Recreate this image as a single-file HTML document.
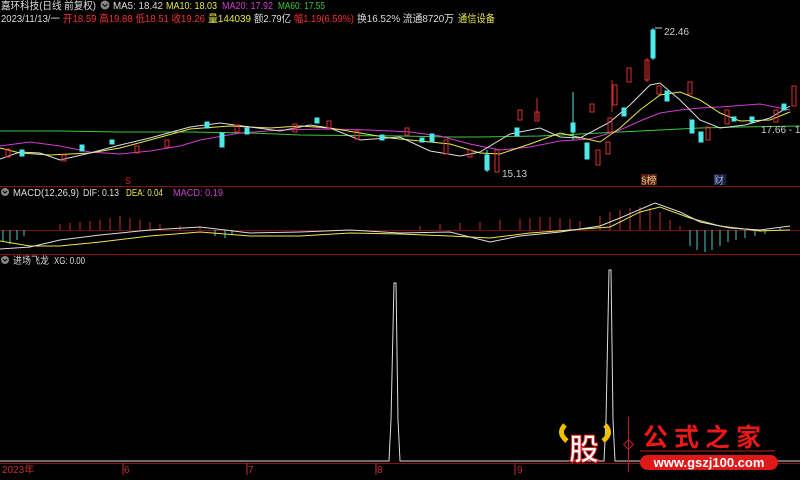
<!DOCTYPE html>
<html><head><meta charset="utf-8"><style>
body{margin:0;background:#000;width:800px;height:475px;overflow:hidden;font-family:"Liberation Sans","Noto Sans CJK SC",sans-serif}
svg text{font-family:"Liberation Sans","Noto Sans CJK SC",sans-serif}
</style></head><body>
<svg width="800" height="475" xmlns="http://www.w3.org/2000/svg">
<rect width="800" height="475" fill="#000"/>
<!-- header -->
<g font-size="10.5">
<text x="1" y="9" fill="#ddd" textLength="95" lengthAdjust="spacingAndGlyphs">嘉环科技(日线 前复权)</text>
<circle cx="105" cy="5" r="4.5" fill="#888"/><path d="M102.5 4l2.5 2.5 2.5-2.5" stroke="#000" fill="none"/>
<text x="113" y="9" fill="#ddd" textLength="50" lengthAdjust="spacingAndGlyphs">MA5: 18.42</text>
<text x="166" y="9" fill="#e8e84a" textLength="51" lengthAdjust="spacingAndGlyphs">MA10: 18.03</text>
<text x="222" y="9" fill="#d03cd0" textLength="51" lengthAdjust="spacingAndGlyphs">MA20: 17.92</text>
<text x="278" y="9" fill="#3cc83c" textLength="47" lengthAdjust="spacingAndGlyphs">MA60: 17.55</text>
<text x="1" y="22" fill="#ddd" textLength="59" lengthAdjust="spacingAndGlyphs">2023/11/13/一</text>
<text x="63" y="22" fill="#f03030" textLength="142" lengthAdjust="spacingAndGlyphs">开18.59 高19.88 低18.51 收19.26</text>
<text x="208" y="22" fill="#e8e84a" textLength="43" lengthAdjust="spacingAndGlyphs">量144039</text>
<text x="254" y="22" fill="#ddd" textLength="37" lengthAdjust="spacingAndGlyphs">额2.79亿</text>
<text x="294" y="22" fill="#f03030" textLength="60" lengthAdjust="spacingAndGlyphs">幅1.19(6.59%)</text>
<text x="357" y="22" fill="#ddd" textLength="97" lengthAdjust="spacingAndGlyphs">换16.52% 流通8720万</text>
<text x="458" y="22" fill="#e8e84a" textLength="37" lengthAdjust="spacingAndGlyphs">通信设备</text>
</g>
<!-- pane lines -->
<line x1="0" y1="186.5" x2="800" y2="186.5" stroke="#8a1010"/>
<line x1="0" y1="254.5" x2="800" y2="254.5" stroke="#8a1010"/>
<line x1="0" y1="463.5" x2="800" y2="463.5" stroke="#8a1010"/>
<text x="125" y="184" fill="#e02020" font-size="9">S</text>
<!-- MA lines main -->
<polyline fill="none" stroke="#3cc83c" points="0,131 60,131 120,132 190,132 250,133 300,135 400,136 450,137 480,137 540,136 620,132 660,130 700,128 740,127 800,126"/>
<polyline fill="none" stroke="#d03cd0" points="0,146 30,142 60,146 90,152 120,154 150,151 180,146 200,140 240,133 280,130 330,129 370,130 410,132 440,136 470,144 500,150 530,147 560,141 590,139 620,130 640,121 660,113 680,110 700,108 720,107 760,104 790,110"/>
<polyline fill="none" stroke="#e8e84a" points="0,148 20,153 50,155 90,153 120,148 150,140 190,129 230,126 270,128 300,126 330,128 360,133 390,138 420,141 450,144 480,153 500,154 530,144 560,133 600,142 620,128 640,110 660,95 680,92 700,100 720,113 740,121 770,120 790,112"/>
<polyline fill="none" stroke="#ddd" points="0,159 20,152 40,153 60,160 90,153 120,145 150,138 190,127 220,123 250,127 280,131 310,125 330,128 360,140 400,137 430,151 460,156 480,152 510,134 540,128 560,137 580,138 610,122 630,105 650,85 660,83 680,100 700,120 720,128 745,125 770,118 790,106"/>
<!-- candles -->
<g stroke-width="1">
<g fill="none" stroke="#e03030">
<rect x="6" y="149" width="4" height="8"/><rect x="62" y="155" width="4" height="6"/><rect x="135" y="146" width="4" height="7"/><rect x="165" y="140" width="4" height="7"/><rect x="235" y="125" width="4" height="7"/><rect x="293" y="124" width="4" height="8"/><rect x="327" y="121" width="4" height="7"/><rect x="355" y="131" width="4" height="8"/><rect x="405" y="128" width="4" height="7"/><rect x="444" y="140" width="4" height="14"/><rect x="468" y="150" width="4" height="7"/><rect x="518" y="110" width="4" height="10"/><rect x="535" y="112" width="4" height="9"/><rect x="590" y="104" width="4" height="8"/><rect x="608" y="118" width="4" height="14"/><rect x="613" y="85" width="4" height="20"/><rect x="627" y="68" width="4" height="14"/><rect x="645" y="60" width="4" height="20"/><rect x="657" y="86" width="4" height="8"/><rect x="688" y="82" width="4" height="12"/><rect x="706" y="127" width="4" height="13"/><rect x="725" y="110" width="4" height="14"/><rect x="774" y="110" width="4" height="12"/><rect x="792" y="86" width="4" height="20"/>
<rect x="596" y="150" width="4" height="15"/><rect x="606" y="142" width="4" height="12"/><rect x="495" y="150" width="4" height="22"/>
</g>
<g fill="#4ee8e8" stroke="#4ee8e8">
<rect x="20" y="150" width="4" height="6"/><rect x="80" y="145" width="4" height="6"/><rect x="110" y="140" width="4" height="4"/><rect x="205" y="122" width="4" height="6"/><rect x="245" y="128" width="4" height="6"/><rect x="315" y="118" width="4" height="5"/><rect x="380" y="135" width="4" height="5"/><rect x="420" y="138" width="4" height="4"/><rect x="430" y="134" width="4" height="8"/><rect x="485" y="155" width="4" height="15"/><rect x="515" y="128" width="4" height="8"/><rect x="571" y="123" width="4" height="9"/><rect x="585" y="143" width="4" height="16"/><rect x="651" y="30" width="4" height="28"/><rect x="622" y="108" width="4" height="8"/><rect x="665" y="91" width="4" height="10"/><rect x="690" y="120" width="4" height="13"/><rect x="699" y="132" width="4" height="10"/><rect x="732" y="117" width="4" height="4"/><rect x="750" y="117" width="4" height="5"/><rect x="782" y="104" width="4" height="6"/><rect x="220" y="133" width="4" height="14"/>
</g>
<g stroke="#4ee8e8"><line x1="653" y1="28" x2="653" y2="60"/><line x1="573" y1="92" x2="573" y2="140"/><line x1="487" y1="150" x2="487" y2="172"/></g>
<g stroke="#e03030"><line x1="647" y1="58" x2="647" y2="82"/><line x1="612" y1="80" x2="612" y2="112"/><line x1="537" y1="98" x2="537" y2="120"/></g>
</g>
<text x="664" y="35" fill="#ccc" font-size="10">22.46</text>
<path d="M655 28h7" stroke="#ccc"/>
<text x="502" y="177" fill="#ccc" font-size="10">15.13</text>
<text x="761" y="133" fill="#ccc" font-size="10">17.66 - 1</text>
<rect x="641" y="174" width="16" height="11" fill="#552010"/><text x="641" y="184" fill="#e8c080" font-size="10">§榜</text>
<rect x="714" y="174" width="12" height="11" fill="#102040"/><text x="714" y="184" fill="#aad" font-size="10">财</text>
<!-- MACD pane -->
<g font-size="10">
<circle cx="5" cy="192" r="4" fill="#888"/><path d="M3 191l2 2 2-2" stroke="#000" fill="none"/>
<text x="13" y="196" fill="#ddd" textLength="66" lengthAdjust="spacingAndGlyphs">MACD(12,26,9)</text>
<text x="83" y="196" fill="#ddd" textLength="36" lengthAdjust="spacingAndGlyphs">DIF: 0.13</text>
<text x="126" y="196" fill="#e8e84a" textLength="37" lengthAdjust="spacingAndGlyphs">DEA: 0.04</text>
<text x="173" y="196" fill="#d03cd0" textLength="50" lengthAdjust="spacingAndGlyphs">MACD: 0.19</text>
<circle cx="5" cy="260" r="4" fill="#888"/><path d="M3 259l2 2 2-2" stroke="#000" fill="none"/>
<text x="13" y="264" fill="#ddd" textLength="36" lengthAdjust="spacingAndGlyphs">进场飞龙</text>
<text x="54" y="264" fill="#ddd" textLength="31" lengthAdjust="spacingAndGlyphs">XG: 0.00</text>
</g>
<line x1="0" y1="230.5" x2="800" y2="230.5" stroke="#701010"/>
<g stroke="#c03030">
<path d="M60 230v-6M70 230v-7M80 230v-8M90 230v-9M100 230v-10M110 230v-12M120 230v-14M130 230v-12M140 230v-10M150 230v-8M160 230v-6M180 230v-4M200 230v-3M420 230v-4M440 230v-6M460 230v-7M480 230v-8M500 230v-10M520 230v-11M530 230v-12M540 230v-13M550 230v-13M560 230v-12M570 230v-11M580 230v-9M600 230v-14M610 230v-18M620 230v-20M630 230v-22M640 230v-23M650 230v-22M660 230v-18M670 230v-10M680 230v-4"/>
</g>
<g stroke="#4ec8c8">
<path d="M3 230v12M10 230v14M17 230v10M24 230v6M215 230v6M225 230v8M232 230v4M690 230v16M697 230v20M705 230v22M712 230v20M720 230v16M728 230v12M736 230v10M745 230v8M755 230v6M765 230v4M780 230v-2"/>
</g>
<polyline fill="none" stroke="#e8e84a" points="0,241 30,246 60,246 100,242 150,236 200,232 250,236 300,236 350,233 400,234 450,236 490,238 530,233 570,230 610,227 640,212 660,207 690,218 720,226 760,231 790,230"/>
<polyline fill="none" stroke="#ddd" points="0,249 30,247 60,240 100,235 150,230 200,227 250,233 300,232 350,230 400,233 450,232 490,242 520,236 560,232 600,226 620,218 655,203 680,212 700,222 730,228 760,230 790,226"/>
<!-- XG pane -->
<polyline fill="none" stroke="#ddd" points="0,461 389,461 391,420 394,283 396,283 398,420 400,461 604,461 606,420 609,270 611,270 613,420 615,461 800,461"/>
<!-- axis -->
<g fill="#c03030" font-size="10">
<text x="2" y="473">2023年</text><text x="124" y="473">6</text><text x="248" y="473">7</text><text x="377" y="473">8</text><text x="517" y="473">9</text>
</g>
<g stroke="#c03030"><path d="M123 463v12M247 463v12M376 463v12M515 463v12"/></g>
<!-- watermark -->
<path d="M565 425q-8 8 2 16M605 425q8 8-2 16" stroke="#f0c000" stroke-width="5" fill="none"/>
<text x="569" y="460" fill="#fff" stroke="#e02020" stroke-width="1" font-size="30" font-weight="bold" font-family="Noto Sans CJK SC">股</text>
<line x1="628.5" y1="417" x2="628.5" y2="472" stroke="#c02020"/>
<rect x="625" y="441" width="7" height="7" transform="rotate(45 628.5 444.5)" fill="none" stroke="#c02020"/>
<text x="643" y="446" fill="#ee1818" font-size="25" font-weight="bold" font-family="Noto Serif CJK SC" letter-spacing="6">公式之家</text>
<line x1="640" y1="451" x2="775" y2="451" stroke="#c02020"/>
<rect x="640" y="455" width="138" height="15" rx="7.5" fill="#e01818"/>
<text x="709" y="467" fill="#fff" font-size="13" font-weight="bold" text-anchor="middle">www.gszj100.com</text>
</svg>
</body></html>
